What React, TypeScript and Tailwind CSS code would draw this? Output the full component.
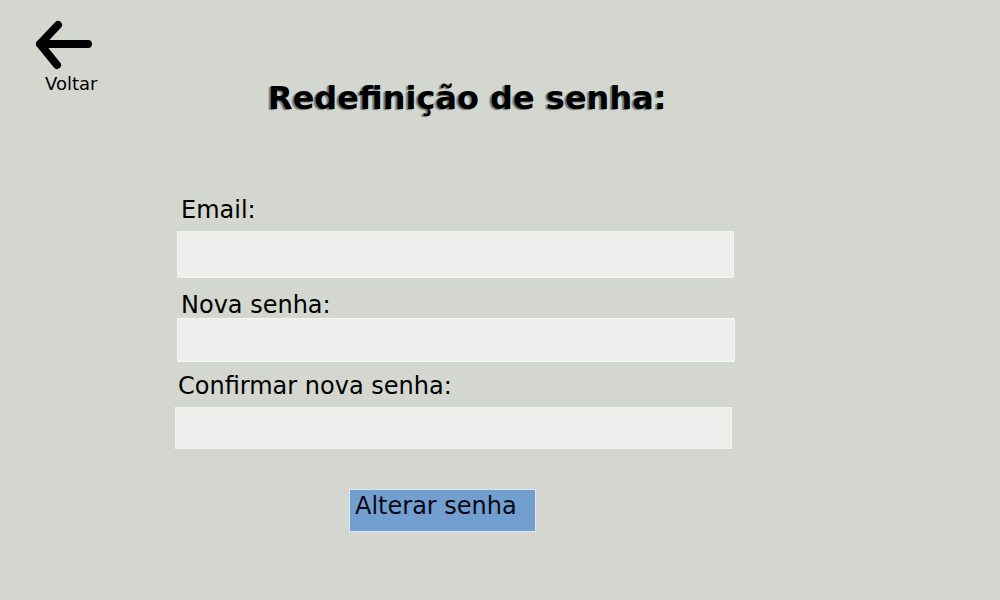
export default function App() {
    return (
        <div className="w-[1000px] h-[600px] overflow-hidden bg-[#d3d7cf] font-['DejaVu_Sans',sans-serif] text-black">
            <div className="flex">
                <div className="w-[175px] shrink-0 pl-[33px] pt-[18px]">
                    <button className="flex flex-col items-start">
                        <svg width="62" height="54" viewBox="33 18 62 54" fill="none" stroke="#000" strokeWidth="8" strokeLinecap="round" strokeLinejoin="round">
                            <path d="M58 25 L40 44 L57 65 M40 44 L88 44" />
                        </svg>
                        <span className="ml-[12px] mt-[3px] text-[18px] leading-none">Voltar</span>
                    </button>
                </div>
                <div className="flex flex-col items-start pt-[82px]">
                    <h1 className="ml-[93px] text-[32px] font-bold leading-none [text-shadow:-2px_1px_1px_rgba(0,0,0,0.45)]">
                        Redefinição de senha:
                    </h1>

                    <label className="ml-[6px] mt-[84px] text-[24px] leading-none">Email:</label>
                    <input type="email" className="ml-[2px] mt-[9px] w-[557px] h-[47px] bg-[#eeeeec] border border-[#f4f4f2] outline-none" />

                    <label className="ml-[6px] mt-[15px] text-[24px] leading-none">Nova senha:</label>
                    <input type="password" className="ml-[2px] mt-[1px] w-[558px] h-[44px] bg-[#eeeeec] border border-[#f4f4f2] outline-none" />

                    <label className="ml-[3px] mt-[12px] text-[24px] leading-none">Confirmar nova senha:</label>
                    <input type="password" className="mt-[9px] w-[557px] h-[42px] bg-[#eeeeec] border border-[#f4f4f2] outline-none" />

                    <button className="ml-[174px] mt-[40px] w-[187px] h-[43px] bg-[#729fcf] border border-[#dbe6f1] flex items-start pl-[5px] pt-[4px] text-[24px] leading-none text-[#0a0a14]">
                        Alterar senha
                    </button>
                </div>
            </div>
        </div>
    )
}
